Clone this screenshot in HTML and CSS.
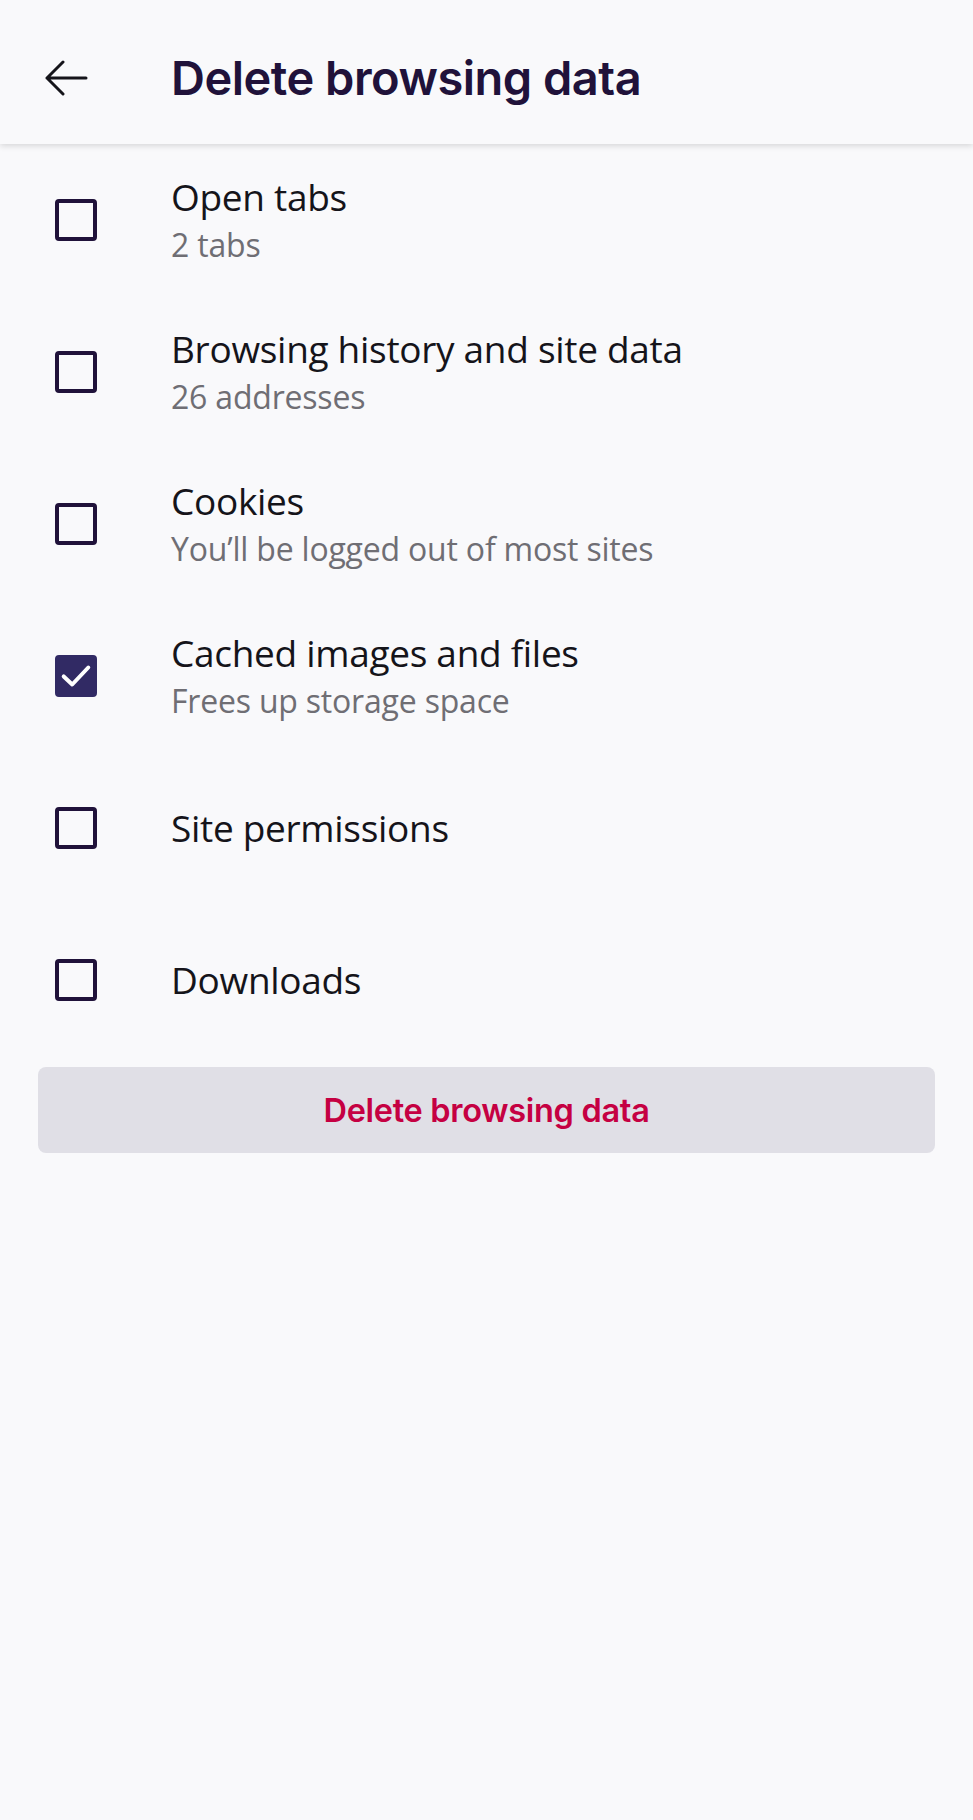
FILE: index.html
```html
<!DOCTYPE html>
<html lang="en">
<head>
    <meta charset="UTF-8">
    <title>Delete browsing data</title>
    <link rel="stylesheet" href="styles.css">
</head>
<body>

<header class="toolbar">
    <button class="back-btn" aria-label="Back">
        <svg width="44" height="36" viewBox="0 0 44 36">
            <path d="M42 18 H3 M19 2 L3 18 L19 34" fill="none" stroke="#15141a" stroke-width="3" stroke-linecap="round" stroke-linejoin="round"/>
        </svg>
    </button>
    <h1 class="toolbar-title">Delete browsing data</h1>
</header>

<ul class="options">
    <li class="option">
        <span class="check"></span>
        <div class="option-text">
            <span class="option-title">Open tabs</span>
            <span class="option-sub">2 tabs</span>
        </div>
    </li>
    <li class="option">
        <span class="check"></span>
        <div class="option-text">
            <span class="option-title">Browsing history and site data</span>
            <span class="option-sub">26 addresses</span>
        </div>
    </li>
    <li class="option">
        <span class="check"></span>
        <div class="option-text">
            <span class="option-title">Cookies</span>
            <span class="option-sub">You’ll be logged out of most sites</span>
        </div>
    </li>
    <li class="option">
        <span class="check checked">
            <svg width="36" height="36" viewBox="0 0 36 36">
                <path d="M5 18.5 L14 27 L31 9" fill="none" stroke="#fff" stroke-width="4.2" stroke-linecap="round" stroke-linejoin="round"/>
            </svg>
        </span>
        <div class="option-text">
            <span class="option-title">Cached images and files</span>
            <span class="option-sub">Frees up storage space</span>
        </div>
    </li>
    <li class="option">
        <span class="check"></span>
        <div class="option-text">
            <span class="option-title">Site permissions</span>
        </div>
    </li>
    <li class="option">
        <span class="check"></span>
        <div class="option-text">
            <span class="option-title">Downloads</span>
        </div>
    </li>
</ul>

<div class="actions">
    <button class="delete-btn">Delete browsing data</button>
</div>

</body>
</html>
```

FILE: styles.css
```css
* {
    margin: 0;
    padding: 0;
    box-sizing: border-box;
}

body {
    background-color: #f9f9fb;
    font-family: 'Open Sans', 'Noto Sans', sans-serif;
    color: #15141a;
    min-height: 1820px;
}

.toolbar {
    height: 144px;
    display: flex;
    align-items: center;
    background-color: #f9f9fb;
    box-shadow: 0 2px 6px rgba(0, 0, 0, 0.14);
    position: relative;
    z-index: 1;
}

.back-btn {
    background: none;
    border: none;
    width: 171px;
    padding-left: 44px;
    display: flex;
    align-items: center;
    padding-top: 12px;
}

.toolbar-title {
    font-family: 'Inter', sans-serif;
    font-weight: 600;
    font-size: 47px;
    color: #20123a;
    padding-top: 10px;
    letter-spacing: -0.5px;
}

.options {
    list-style: none;
}

.option {
    height: 152px;
    display: flex;
    align-items: center;
}

.check {
    width: 42px;
    height: 42px;
    margin-left: 55px;
    margin-right: 74px;
    border: 4.5px solid #20123a;
    border-radius: 4px;
    flex-shrink: 0;
    display: flex;
    align-items: center;
    justify-content: center;
}

.check.checked {
    background-color: #312a64;
    border-color: #312a64;
}

.option-text {
    display: flex;
    flex-direction: column;
}

.option-title {
    font-size: 37px;
    line-height: 50px;
    color: #15141a;
    letter-spacing: -0.3px;
}

.option-sub {
    font-size: 32px;
    line-height: 46px;
    color: #6f6e74;
    letter-spacing: -0.2px;
}

.actions {
    padding: 11px 38px 0;
}

.delete-btn {
    width: 100%;
    height: 86px;
    border: none;
    border-radius: 8px;
    background-color: #e0dfe6;
    color: #c50042;
    font-family: 'Inter', sans-serif;
    font-weight: 600;
    font-size: 32.5px;
    letter-spacing: -0.3px;
}
```
